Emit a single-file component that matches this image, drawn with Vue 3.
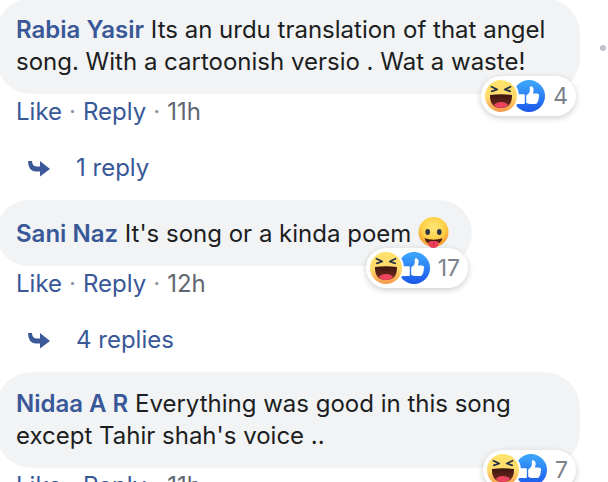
<script setup>
const comments = [
  {
    id: 1,
    author: 'Rabia Yasir',
    text: 'Its an urdu translation of that angel song. With a cartoonish versio . Wat a waste!',
    age: '11h',
    reactions: 4,
    replies: '1 reply',
    menu: true,
  },
  {
    id: 2,
    author: 'Sani Naz',
    text: "It's song or a kinda poem",
    emoji: true,
    age: '12h',
    reactions: 17,
    replies: '4 replies',
  },
  {
    id: 3,
    author: 'Nidaa A R',
    text: "Everything was good in this song except Tahir shah's voice ..",
    age: '11h',
    reactions: 7,
  },
]
</script>

<template>
  <main class="thread">
    <svg class="defs" aria-hidden="true">
      <defs>
        <linearGradient id="face" x1="0" y1="0" x2="0" y2="1">
          <stop offset="0" stop-color="#ffe36b" />
          <stop offset="0.55" stop-color="#ffda6b" />
          <stop offset="1" stop-color="#f7964b" />
        </linearGradient>
        <linearGradient id="mouth" x1="0" y1="0" x2="0" y2="1">
          <stop offset="0" stop-color="#3b1510" />
          <stop offset="1" stop-color="#7a2e20" />
        </linearGradient>
        <linearGradient id="like" x1="0" y1="0" x2="0" y2="1">
          <stop offset="0.1" stop-color="#3ba2fb" />
          <stop offset="1" stop-color="#1a56ea" />
        </linearGradient>
        <radialGradient id="cheeky" cx="0.5" cy="0.36" r="0.65">
          <stop offset="0" stop-color="#ffe77a" />
          <stop offset="0.6" stop-color="#ffcf45" />
          <stop offset="1" stop-color="#f6902c" />
        </radialGradient>
      </defs>
    </svg>

    <article v-for="c in comments" :key="c.id" class="comment">
      <div class="row">
        <div class="bubble">
          <p class="body">
            <a class="author" href="#">{{ c.author }}</a>
            {{ c.text }}
            <svg v-if="c.emoji" class="emoji" viewBox="0 0 32 32" role="img" aria-label="Face with tongue">
              <circle cx="15.5" cy="16" r="15" fill="url(#cheeky)" />
              <ellipse cx="9.7" cy="16" rx="2.3" ry="3" fill="#2b3447" />
              <ellipse cx="21.3" cy="16" rx="2.3" ry="3" fill="#2b3447" />
              <path d="M6.5 22.3Q15.5 25 24.5 22.3Q23 28.5 15.5 28.5Q8 28.5 6.5 22.3Z" fill="#4a1d12" />
              <path d="M10.5 25.8Q15.5 24.3 20.5 25.8V28Q20 32 15.5 32Q11 32 10.500 28Z" fill="#ee4058" />
              <path d="M15.5 26V29.5" stroke="#c02340" stroke-width="1" />
            </svg>
          </p>
          <button class="pill" type="button" :aria-label="c.reactions + ' reactions'">
            <svg class="haha" viewBox="0 0 36 36" aria-hidden="true">
              <circle cx="18" cy="18" r="18" fill="#fff" />
              <circle cx="18" cy="18" r="16" fill="url(#face)" />
              <path d="M8.5 8.8L14.2 11.5L8.8 13.3M27.5 8.8L21.8 11.5L27.2 13.3" fill="none" stroke="#263048" stroke-width="1.8" stroke-linecap="round" stroke-linejoin="round" />
              <path d="M7 17Q18 15.5 29 17Q29.3 30 18 30Q6.7 30 7 17Z" fill="url(#mouth)" />
              <path d="M10.8 26.8Q13.5 23.9 18 23.9Q22.5 23.9 25.2 26.8Q22.6 30 18 30Q13.4 30 10.8 26.8Z" fill="#ef4460" />
            </svg>
            <svg class="thumb" viewBox="0 0 32 32" aria-hidden="true">
              <circle cx="16" cy="16" r="16" fill="url(#like)" />
              <path d="M4 14.200H11Q11.800 14.200 11.800 15V23.200Q11.800 24 11 24H2.500Z" fill="#fff" />
              <path d="M13.2 16Q13.200 15.200 14 14.700C16 13.400 16.800 12.200 16.800 10V7.600C16.800 5.600 20.300 5.800 20.600 9.300C20.700 11 20.300 12.400 19.900 13.600H24.100Q26.500 14 26.200 16Q26.100 16.900 25.500 17.300Q26.400 18.600 25.200 19.900Q25.600 21.200 24.500 22Q24.500 24 22.200 24H17.500Q15 24 13.200 22.800Z" fill="#fff" />
            </svg>
            <span class="count">{{ c.reactions }}</span>
          </button>
        </div>
        <button v-if="c.menu" class="menu" type="button" aria-label="Comment options"><span class="dot"></span></button>
      </div>

      <footer class="actions">
        <button type="button" class="link">Like</button>
        <span class="sep">·</span>
        <button type="button" class="link">Reply</button>
        <span class="sep">·</span>
        <a class="age" href="#">{{ c.age }}</a>
      </footer>

      <button v-if="c.replies" type="button" class="link replies">
        <svg class="arrow" viewBox="0 0 22 18" aria-hidden="true">
          <path d="M0 2H4Q4 7 8.500 7.500H12V2L22 10L12 17.500V12.500H8Q0 12 0 2Z" fill="#3b5998" />
        </svg>
        <span>{{ c.replies }}</span>
      </button>
    </article>
  </main>
</template>

<style>
body {
  margin: 0;
  background: #fff;
}
</style>

<style scoped>
.thread {
  box-sizing: border-box;
  height: 100vh;
  overflow: hidden;
  font-family: Inter, "Liberation Sans", sans-serif;
  font-size: 24px;
  line-height: 32px;
  color: #1c1e21;
}

.defs {
  position: absolute;
  width: 0;
  height: 0;
}

.comment {
  margin: 0 0 16px -4px;
}

.comment:first-of-type {
  margin-top: -2px;
}

.row {
  display: grid;
  grid-template-columns: minmax(0, 1fr) 28px;
  align-items: center;
}

.bubble {
  position: relative;
  justify-self: start;
  box-sizing: border-box;
  padding: 16px 20px;
  border-radius: 36px;
  background: #f1f3f5;
}

.body {
  margin: 0;
}

.author {
  color: #385898;
  font-weight: 600;
  text-decoration: none;
}

.emoji {
  width: 32px;
  height: 32px;
  margin-right: 2px;
  vertical-align: -6px;
}

button {
  padding: 0;
  border: 0;
  background: none;
  font: inherit;
  cursor: pointer;
}

.pill {
  position: absolute;
  right: 4px;
  bottom: -22px;
  display: flex;
  align-items: center;
  height: 40px;
  padding: 0 8px 0 2px;
  border-radius: 20px;
  background: #fff;
  box-shadow: 0 2px 6px rgba(0, 0, 0, 0.2);
}

.haha {
  position: relative;
  z-index: 1;
  width: 36px;
  height: 36px;
}

.thumb {
  width: 32px;
  height: 32px;
  margin-left: -6px;
}

.count {
  margin-left: 8px;
  font-size: 23px;
  color: #7c828a;
}

.menu {
  display: flex;
  justify-content: flex-end;
  padding: 4px 2px 0 0;
}

.dot {
  width: 6px;
  height: 6px;
  border-radius: 50%;
  background: #bec0cc;
}

.actions {
  display: flex;
  align-items: center;
  padding: 2px 20px 0;
}

.link {
  color: #385898;
}

.sep {
  width: 21px;
  text-align: center;
  color: #90949c;
}

.age {
  color: #616770;
  text-decoration: none;
}

.replies {
  display: flex;
  align-items: center;
  gap: 26px;
  margin-top: 24px;
  padding-left: 32px;
}

.arrow {
  width: 22px;
  height: 18px;
}
</style>
